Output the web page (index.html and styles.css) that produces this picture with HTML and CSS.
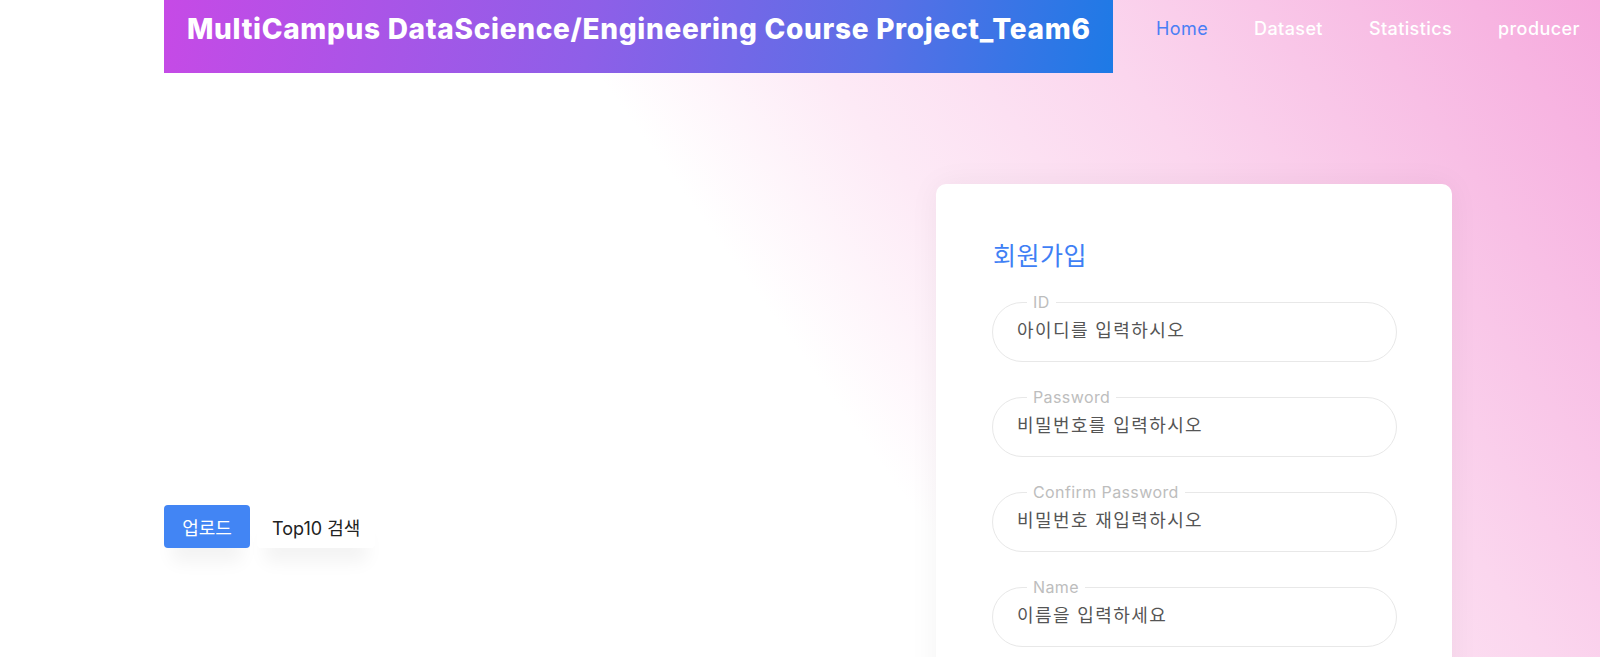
FILE: index.html
```html
<!DOCTYPE html>
<html lang="ko">
<head>
<meta charset="utf-8">
<title>MultiCampus Team6</title>
<link rel="stylesheet" href="styles.css">
</head>
<body>
<div class="page">
  <header class="topbar">
    <div class="brand">MultiCampus DataScience/Engineering Course Project_Team6</div>
    <nav class="nav">
      <a class="nav-link active" href="#">Home</a>
      <a class="nav-link" href="#">Dataset</a>
      <a class="nav-link" href="#">Statistics</a>
      <a class="nav-link" href="#">producer</a>
    </nav>
  </header>
  <main class="main">
    <section class="left">
      <div class="actions">
        <button class="btn btn-primary">업로드</button>
        <button class="btn btn-plain">Top10 검색</button>
      </div>
    </section>
    <section class="card">
      <h2 class="card-title">회원가입</h2>
      <form class="form">
        <fieldset class="field">
          <legend class="field-label">ID</legend>
          <input class="field-input" type="text" placeholder="아이디를 입력하시오">
        </fieldset>
        <fieldset class="field">
          <legend class="field-label">Password</legend>
          <input class="field-input" type="password" placeholder="비밀번호를 입력하시오">
        </fieldset>
        <fieldset class="field">
          <legend class="field-label">Confirm Password</legend>
          <input class="field-input" type="password" placeholder="비밀번호 재입력하시오">
        </fieldset>
        <fieldset class="field">
          <legend class="field-label">Name</legend>
          <input class="field-input" type="text" placeholder="이름을 입력하세요">
        </fieldset>
      </form>
    </section>
  </main>
</div>
</body>
</html>
```

FILE: styles.css
```css
html, body {
  margin: 0;
  padding: 0;
}
body {
  font-family: Inter, "Noto Sans CJK KR", sans-serif;
  min-height: 657px;
  overflow: hidden;
  background: linear-gradient(54deg, #ffffff 0%, #ffffff 50%, #fdeaf6 61%, #fbd6ee 75%, #f8bfe5 88%, #f6a9dd 100%);
}
.page {
  display: flex;
  flex-direction: column;
}
.topbar {
  display: flex;
  align-items: flex-start;
  padding-left: 164px;
  height: 73px;
}
.brand {
  flex-shrink: 0;
  width: 949px;
  height: 73px;
  box-sizing: border-box;
  padding: 12px 0 0 23px;
  background: linear-gradient(100deg, #c64ae6 0%, #8e5fe8 45%, #5a6fe6 75%, #1d7ae6 100%);
  color: #fff;
  font-weight: 800;
  font-size: 28px;
  line-height: 34px;
  letter-spacing: 0.7px;
  white-space: nowrap;
}
.nav {
  display: flex;
  flex-shrink: 0;
  padding-top: 17px;
  padding-left: 43px;
}
.nav-link {
  color: #fff;
  text-decoration: none;
  font-size: 18px;
  font-weight: 500;
  line-height: 24px;
  letter-spacing: 0.4px;
  margin-right: 46px;
  white-space: nowrap;
}
.nav-link:last-child {
  margin-right: 0;
}
.nav-link.active {
  color: #4a7ef5;
  font-weight: 400;
}
.main {
  display: flex;
  padding-left: 164px;
}
.left {
  width: 772px;
  padding-top: 432px;
}
.actions {
  display: flex;
  gap: 7px;
}
.btn {
  font-family: Inter, "Noto Sans CJK KR", sans-serif;
  font-size: 18px;
  height: 43px;
  border: none;
  border-radius: 4px;
  cursor: pointer;
  box-shadow: 0 22px 18px -8px rgba(0, 0, 0, 0.05);
}
.btn-primary {
  background: #4285f4;
  color: #fff;
  width: 86px;
}
.btn-plain {
  background: #fff;
  color: #222;
  padding: 0 15px;
}
.card {
  margin-top: 111px;
  width: 516px;
  box-sizing: border-box;
  background: #fff;
  border-radius: 10px;
  box-shadow: 0 0 30px rgba(0, 0, 0, 0.05);
  padding: 55px 55px 60px 56px;
}
.card-title {
  margin: 0 0 21px 1px;
  color: #3f7ff5;
  font-weight: 400;
  font-size: 25px;
  line-height: 34px;
  letter-spacing: 0.5px;
}
.form {
  display: flex;
  flex-direction: column;
  gap: 27px;
}
.field {
  margin: 0;
  border: 1px solid #e8e8e8;
  border-radius: 30px;
  padding: 0 24px 6px;
  height: 68px;
  box-sizing: border-box;
}
.field-label {
  margin-left: 10px;
  padding: 0 6px;
  color: #bdbdbd;
  font-size: 16px;
  line-height: 16px;
  letter-spacing: 0.4px;
}
.field-input {
  display: block;
  width: 100%;
  border: none;
  outline: none;
  background: transparent;
  padding: 0;
  height: 40px;
  font-family: Inter, "Noto Sans CJK KR", sans-serif;
  font-size: 18px;
  letter-spacing: 1.4px;
  color: #444;
}
.field-input::placeholder {
  color: #555;
}
```
